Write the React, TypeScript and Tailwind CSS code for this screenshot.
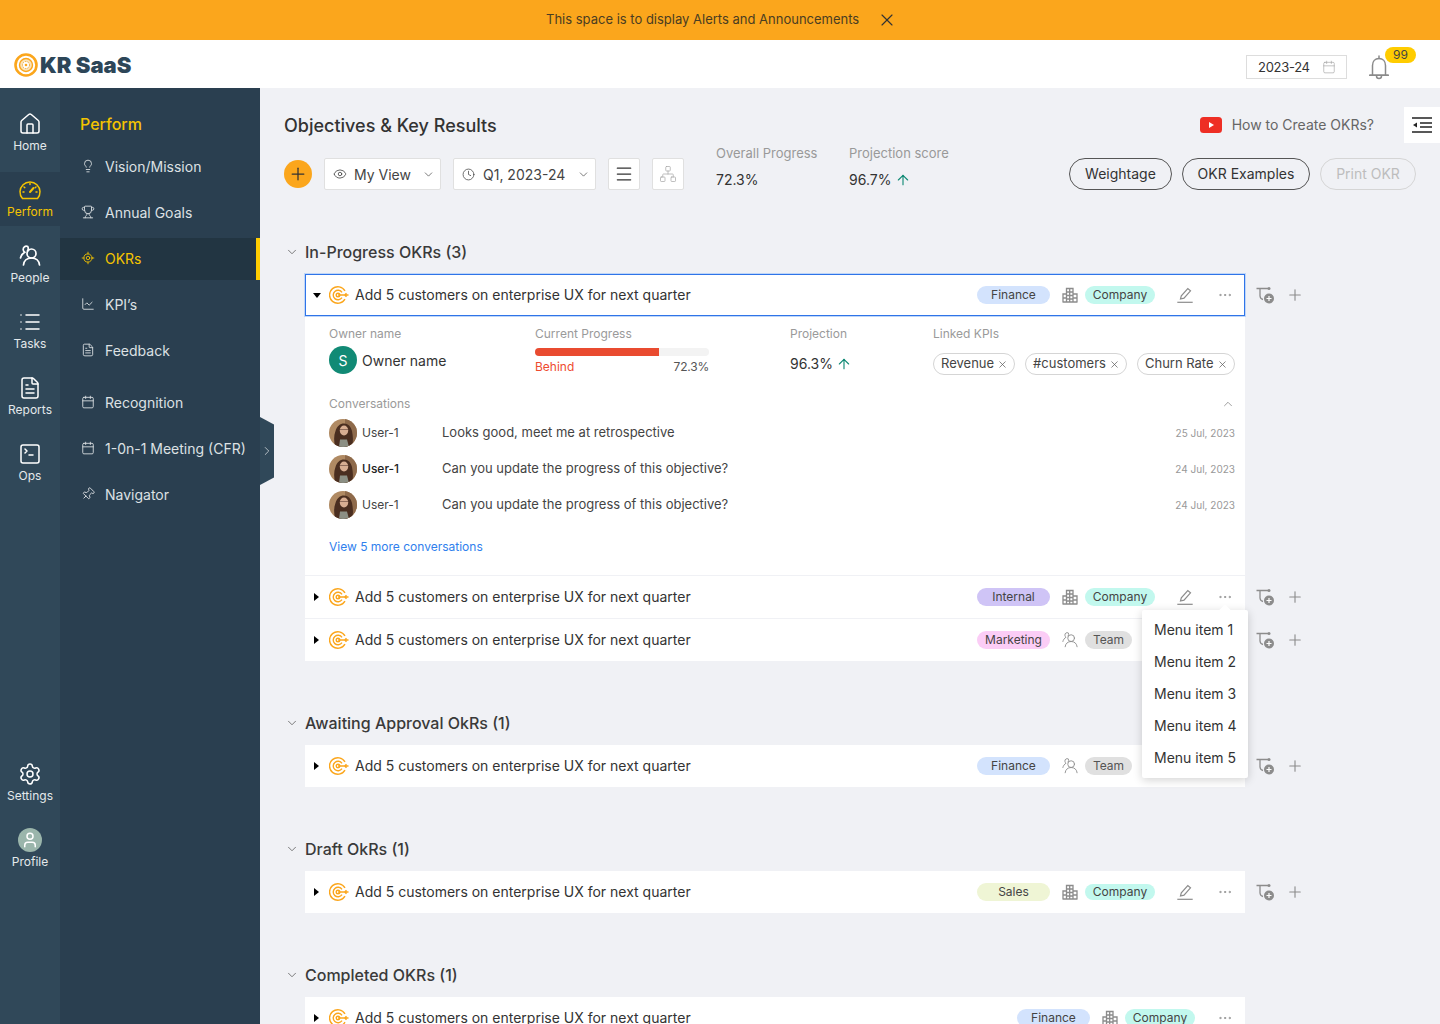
import React from 'react';
import {
  ArrowUp, Calendar, ChartLine, ChevronDown, ChevronRight, ChevronUp, Clock, Ellipsis, Eye, FileText,
  House, Lightbulb, List, LocateFixed, Menu, Network, Pin, Plus, Settings, SquareTerminal, Trophy, User, X,
} from 'lucide-react';

// Hand drawn icons that the icon package has no close match for
const TargetIcon = () => (
  <svg width="20" height="20" viewBox="0 0 20 20" fill="none" stroke="#FBA61C" strokeWidth="1.400" className="shrink-0">
    <path d="M16 5.800A8.300 8.300 0 1 0 16 14.200" />
    <path d="M13 7.300A4.800 4.800 0 1 0 13 12.700" />
    <circle cx="9" cy="10" r="1.800" />
    <path d="M9 10H19.500M17.500 8.200l-1.800 1.800 1.800 1.800" />
  </svg>
);

const LogoIcon = () => (
  <svg width="24" height="24" viewBox="0 0 24 24" fill="none" className="shrink-0">
    <circle cx="12" cy="12" r="10.500" stroke="#FBA61C" strokeWidth="2.600" />
    <circle cx="12" cy="12" r="6.500" fill="#FBE3B8" stroke="#FBA61C" strokeWidth="1.400" />
    <circle cx="12" cy="12" r="3.500" fill="#fff" stroke="#E9A63E" strokeWidth="1" strokeDasharray="1.500 1" />
    <circle cx="12" cy="12" r="1.300" fill="#FBA61C" />
  </svg>
);

const BellIcon = () => (
  <svg width="20" height="25" viewBox="0 0 20 25" fill="none" stroke="#8A8A8A" strokeWidth="1.500" strokeLinecap="round" className="shrink-0">
    <path d="M3.500 20V10.500C3.500 6.500 6 3.500 10 3.500s6.500 3 6.500 7V20" />
    <path d="M.8 20.200h18.400" strokeWidth="1.800" />
    <path d="M10 1v2.500" />
    <path d="M7.500 21a2.500 2.500 0 0 0 5 0" />
  </svg>
);

const PeopleIcon = ({ size = 24, color = 'currentColor', sw = 1.700 }: { size?: number; color?: string; sw?: number }) => (
  <svg width={size} height={size} viewBox="0 0 24 24" fill="none" stroke={color} strokeWidth={sw} strokeLinecap="round" className="shrink-0">
    <circle cx="13.500" cy="9.500" r="4.500" />
    <path d="M5.500 21c.5-4.400 3.600-7 8-7s7.500 2.600 8 7" />
    <path d="M9.500 6.700A4 4 0 0 0 9.800 2.600C7.500 1.400 5 3 5.200 5.600c.1 1.200.7 2.100 1.500 2.700C4.500 9.700 3 11.600 2.500 14" />
  </svg>
);

const BuildingIcon = () => (
  <svg width="16" height="16" viewBox="0 0 16 16" fill="none" stroke="#8C8C8C" strokeWidth="1.300" className="shrink-0">
    <path d="M4.500 15V1.500H11V15M1 15V7h3.500M11 7h4v8M.5 15h15" />
    <path d="M4.500 5h6.500M4.500 8.500h6.500M4.500 12h6.500M7.700 1.500V15M1 11h3.500M11 11h4" />
  </svg>
);

const PencilIcon = () => (
  <svg width="16" height="16" viewBox="0 0 16 16" fill="none" stroke="#8C8C8C" strokeWidth="1.200" className="shrink-0">
    <path d="M3.500 12 4.300 8.800 10.800 1.500l2.700 2.400-6.500 7.200L3.500 12Z" />
    <path d="M.3 15.300h15.400" />
  </svg>
);

const LinkAddIcon = () => (
  <svg width="18" height="18" viewBox="0 0 18 18" fill="none" className="shrink-0">
    <path d="M.5 2.500h11.500M4 2.500v7.500a4 4 0 0 0 3 3.500" stroke="#8C8C8C" strokeWidth="1.300" />
    <circle cx="13" cy="2.500" r="1.500" fill="#8C8C8C" />
    <circle cx="13" cy="12.500" r="5" fill="#8C8C8C" />
    <path d="M13 10v5M10.500 12.500h5" stroke="#fff" strokeWidth="1.200" />
  </svg>
);

const Avatar = () => (
  <div className="w-7 h-7 rounded-full overflow-hidden shrink-0">
    <svg width="28" height="28" viewBox="0 0 28 28">
      <rect width="28" height="28" fill="#B08A63" />
      <rect x="16" width="12" height="28" fill="#8E6A4B" />
      <path d="M6 28c-1-6-1.500-11 .5-16C8 7 11 4.500 15 4.500s7 3 8 7.500c1 5 1.500 11 0 16H6Z" fill="#4A2E20" />
      <ellipse cx="15" cy="11.500" rx="4.200" ry="5" fill="#D8AE92" />
      <path d="M11 10.500h8" stroke="#7C5A4C" strokeWidth=".8" />
      <path d="M11 20.500h7l2 7.500H10l1-7.500Z" fill="#8C8F84" />
    </svg>
  </div>
);

const railTop = [
  { label: 'Home', Icon: House },
  { label: 'Perform', active: true },
  { label: 'People', people: true },
  { label: 'Tasks', Icon: List },
  { label: 'Reports', Icon: FileText },
  { label: 'Ops', Icon: SquareTerminal },
];

const navGroupOne = [
  { label: 'Vision/Mission', Icon: Lightbulb },
  { label: 'Annual Goals', Icon: Trophy },
  { label: 'OKRs', Icon: LocateFixed, active: true },
  { label: 'KPI’s', Icon: ChartLine },
  { label: 'Feedback', Icon: FileText },
];

const navGroupTwo = [
  { label: 'Recognition', Icon: Calendar },
  { label: '1-0n-1 Meeting (CFR)', Icon: Calendar },
  { label: 'Navigator', Icon: Pin, turned: true },
];

const conversations = [
  { text: 'Looks good, meet me at retrospective', date: '25 Jul, 2023' },
  { text: 'Can you update the progress of this objective?', date: '24 Jul, 2023', bold: true },
  { text: 'Can you update the progress of this objective?', date: '24 Jul, 2023' },
];

const kpis = ['Revenue', '#customers', 'Churn Rate'];

const GaugeIcon = () => (
  <svg width="24" height="24" viewBox="0 0 24 24" fill="none" stroke="#F5C400" strokeWidth="1.500" strokeLinecap="round">
    <path d="M4.500 20.500A10 10 0 1 1 19.500 20.500Z" />
    <path d="M12 14l3.500-4" strokeWidth="2" />
    <path d="M12 5.500v1M6 9l.8.6M18 9l-.8.6M5 14h1M18 14h1" />
  </svg>
);

const tagStyles: Record<string, string> = {
  Finance: 'bg-[#D3E3FD]',
  Internal: 'bg-[#CFC4F6]',
  Marketing: 'bg-[#FBCDF6]',
  Sales: 'bg-[#EFF5D5]',
};

const OkrRow = ({ tag, scope, open, noEdit, children }: { tag: string; scope: string; open?: boolean; noEdit?: boolean; children?: React.ReactNode }) => (
  <div className="flex items-center w-[1000px]">
    <div className={`relative w-[940px] h-[42px] shrink-0 flex items-center bg-white pl-[8px] ${open ? 'pr-[11px] border border-[#2F74E8] ring-1 ring-[#BFD6F8]' : 'pr-[12px]'}`}>
      {open
        ? <span className="w-0 h-0 -ml-px mr-[8px] shrink-0 border-l-[4px] border-r-[4px] border-t-[5px] border-l-transparent border-r-transparent border-t-black" />
        : <span className="w-0 h-0 ml-px mr-[10px] shrink-0 border-t-[4px] border-b-[4px] border-l-[5px] border-t-transparent border-b-transparent border-l-black" />}
      <TargetIcon />
      <span className="ml-[6px] -mt-[2px] text-[14px] text-[#333]">Add 5 customers on enterprise UX for next quarter</span>
      <div className="ml-auto flex items-center">
        <span className={`w-[73px] h-[18px] rounded-full text-center text-[12px] leading-[18px] text-[#444] ${tagStyles[tag]}`}>{tag}</span>
        <span className={`${scope === 'Company' ? 'ml-[12px]' : 'ml-[11px]'} flex`}>{scope === 'Company' ? <BuildingIcon /> : <PeopleIcon size={18} color="#8C8C8C" sw={1.200} />}</span>
        <div className={`${scope === 'Company' ? 'ml-[7px]' : 'ml-[6px]'} w-[70px] flex items-center`}>
          {scope === 'Company'
            ? <span className={`w-[70px] rounded-full bg-[#C2F8EE] text-center text-[12px] text-[#444] ${tag === 'Sales' ? 'h-4 leading-4' : 'h-[18px] leading-[18px]'}`}>Company</span>
            : <span className="w-[47px] h-[18px] rounded-full bg-[#E0E0E0] text-center text-[12px] leading-[18px] text-[#555]">Team</span>}
        </div>
        {!noEdit && <span className="ml-[22px]"><PencilIcon /></span>}
        <Ellipsis size={16} strokeWidth={1.300} className={`${noEdit ? 'ml-[22px]' : 'ml-[24px]'} text-[#8C8C8C]`} />
      </div>
      {children}
    </div>
    {!noEdit && (
      <div className="flex items-center ml-[11px]">
        <LinkAddIcon />
        <Plus size={18} strokeWidth={1.500} className="ml-[12px] text-[#8C8C8C]" />
      </div>
    )}
  </div>
);

const SectionHead = ({ title }: { title: string }) => (
  <div className="flex items-center h-6 mt-[50px] mb-[10px]">
    <ChevronDown size={14} strokeWidth={1.300} className="ml-px text-[#555]" />
    <span className="ml-[6px] text-[16px] font-medium text-[#3A3A3A]">{title}</span>
  </div>
);

const Detail = () => (
  <div className="w-[940px] h-[260px] bg-white border-b border-[#F0F1F5] pl-[24px] pr-[10px] pt-[10px]">
    <div className="flex">
      <div className="w-[206px]">
        <div className="text-[12px] leading-4 text-[#9A9A9A]">Owner name</div>
        <div className="flex items-center mt-[4px]">
          <span className="w-7 h-7 rounded-full bg-[#118A75] text-white text-[14px] flex items-center justify-center">S</span>
          <span className="ml-[5px] text-[14px] text-[#333]">Owner name</span>
        </div>
      </div>
      <div className="w-[255px]">
        <div className="text-[12px] leading-4 text-[#9A9A9A]">Current Progress</div>
        <div className="w-[174px] h-2 mt-[6px] rounded-full bg-[#F3F3F3]">
          <div className="h-2 w-[124px] rounded-l-full bg-[#E94B30]" />
        </div>
        <div className="w-[174px] flex justify-between mt-[3px] text-[12px] leading-4">
          <span className="text-[#EE4B2F]">Behind</span>
          <span className="text-[#555] tracking-[-0.2px]">72.3%</span>
        </div>
      </div>
      <div className="w-[143px]">
        <div className="text-[12px] leading-4 text-[#9A9A9A]">Projection</div>
        <div className="flex items-center mt-[11px] text-[14px] text-[#333]">
          96.3%
          <ArrowUp size={16} strokeWidth={1.700} className="ml-[3px] text-[#118A75]" />
        </div>
      </div>
      <div className="flex-1">
        <div className="text-[12px] leading-4 text-[#9A9A9A]">Linked KPIs</div>
        <div className="flex gap-[10px] mt-[11px]">
          {kpis.map((kpi) => (
            <span key={kpi} className="h-[22px] pl-[7px] pr-[6px] flex items-center rounded-full border border-[#D5D5D5] text-[13px] text-[#444]">
              {kpi}
              <X size={11} strokeWidth={1.500} className="ml-[3px] text-[#555]" />
            </span>
          ))}
        </div>
      </div>
    </div>
    <div className="flex items-center justify-between mt-[21px]">
      <span className="text-[12px] leading-4 text-[#9A9A9A]">Conversations</span>
      <ChevronUp size={14} strokeWidth={1.200} className="text-[#777]" />
    </div>
    <div className="mt-[7px] flex flex-col gap-2">
      {conversations.map((c, i) => (
        <div key={i} className="flex items-center h-7">
          <Avatar />
          <span className={`ml-[5px] w-[80px] text-[12px] ${c.bold ? 'font-medium text-[#222]' : 'text-[#444]'}`}>User-1</span>
          <span className="text-[13px] text-[#444]">{c.text}</span>
          <span className="ml-auto text-[10px] text-[#999]">{c.date}</span>
        </div>
      ))}
    </div>
    <div className="mt-[20px] text-[12px] leading-4 text-[#2F80ED]">View 5 more conversations</div>
  </div>
);

const RowMenu = () => (
  <div className="absolute left-[837px] top-[34px] z-10 w-[106px] h-[168px] bg-white rounded-[2px] shadow-[0_2px_10px_rgba(0,0,0,0.18)] py-[3px]">
    <div className="absolute right-[19px] -top-[4px] w-2 h-2 rotate-45 bg-white" />
    {[1, 2, 3, 4, 5].map((n) => (
      <div key={n} className="h-8 pl-[12px] flex items-center text-[14px] text-[#333]">Menu item {n}</div>
    ))}
  </div>
);

export default function App() {
  return (
    <div className="relative w-[1440px] h-[1024px] overflow-hidden flex flex-col font-['Inter',sans-serif] bg-[#F0F1F5]">
      {/* Announcement bar */}
      <div className="h-10 shrink-0 bg-[#FBA61C] flex items-center pl-[546px]">
        <span className="text-[13px] text-[#4A3D22]">This space is to display Alerts and Announcements</span>
        <X size={20} strokeWidth={1.400} className="ml-[18px] text-[#333]" />
      </div>

      {/* Top header */}
      <div className="h-12 shrink-0 bg-white flex items-center pl-[14px] pr-[24px]">
        <span className="mt-[2px] flex"><LogoIcon /></span>
        <span className="ml-[2px] mt-[2px] text-[22px] font-black text-[#2D4658]">KR SaaS</span>
        <div className="ml-auto mt-[6px] w-[101px] h-6 border border-[#DDDDDD] flex items-center justify-between pl-[11px] pr-[10px]">
          <span className="mt-[1px] text-[13px] tracking-[-0.3px] text-[#333]">2023-24</span>
          <Calendar size={14} strokeWidth={1} className="text-[#999]" />
        </div>
        <div className="relative mt-[6px] ml-[22px] mr-[27px]">
          <BellIcon />
          <span className="absolute -top-[8px] left-[16px] w-[31px] h-4 rounded-full bg-[#FFCC00] text-center text-[12px] leading-4 text-[#444]">99</span>
        </div>
      </div>

      <div className="flex-1 flex min-h-0">
        {/* Icon rail */}
        <div className="w-[60px] shrink-0 bg-[#304859] flex flex-col pt-[18px] pb-[148px]">
          <div className="flex flex-col gap-3">
            {railTop.map((item) => (
              <div key={item.label} className={`h-[54px] pt-[6px] flex flex-col items-center ${item.active ? 'bg-[#2A3F50] text-[#F5C400]' : 'text-white'}`}>
                {item.active ? <GaugeIcon /> : item.people ? <PeopleIcon /> : item.Icon ? <item.Icon size={24} strokeWidth={1.500} /> : null}
                <span className={`text-[12px] leading-4 mt-[2px] ${item.active ? '' : 'text-[#E4E8EB]'}`}>{item.label}</span>
              </div>
            ))}
          </div>
          <div className="mt-auto flex flex-col gap-3">
            <div className="h-[54px] pt-[6px] flex flex-col items-center text-white">
              <Settings size={24} strokeWidth={1.500} />
              <span className="text-[12px] leading-4 mt-[2px] text-[#E4E8EB]">Settings</span>
            </div>
            <div className="h-[54px] pt-[6px] flex flex-col items-center text-white">
              <span className="w-6 h-6 rounded-full bg-[#9AB5AB] flex items-center justify-center">
                <User size={18} strokeWidth={2} />
              </span>
              <span className="text-[12px] leading-4 mt-[2px] text-[#E4E8EB]">Profile</span>
            </div>
          </div>
        </div>

        {/* Section nav */}
        <div className="relative w-[200px] shrink-0 bg-[#2A3F50]">
          <div className="pl-[20px] pt-[24px] h-[58px] text-[16px] leading-6 font-medium text-[#F5C400]">Perform</div>
          <div className="flex flex-col gap-1">
            {navGroupOne.map((item) => (
              <div key={item.label} className={`h-[42px] pl-[21px] pb-[2px] flex items-center text-[14px] ${item.active ? 'bg-[#223542] text-[#F5C400] border-r-4 border-[#FFCC00]' : 'text-[#DDE1E4]'}`}>
                <item.Icon size={14} strokeWidth={1.500} className="shrink-0" />
                <span className="ml-[10px]">{item.label}</span>
              </div>
            ))}
          </div>
          <div className="flex flex-col gap-1 mt-[10px]">
            {navGroupTwo.map((item) => (
              <div key={item.label} className="h-[42px] pl-[21px] pb-[2px] flex items-center text-[14px] text-[#DDE1E4]">
                <item.Icon size={14} strokeWidth={1.500} className={`shrink-0 ${item.turned ? 'rotate-45' : ''}`} />
                <span className="ml-[10px]">{item.label}</span>
              </div>
            ))}
          </div>
          {/* Collapse tab */}
          <div className="absolute left-[200px] top-[329px] w-[14px] h-[68px] bg-[#304859] [clip-path:polygon(0_0,100%_11%,100%_89%,0_100%)] flex items-center justify-center text-[#DDE1E4]">
            <ChevronRight size={14} strokeWidth={1.300} />
          </div>
        </div>

        {/* Main content */}
        <div className="relative flex-1 min-w-0 pl-6 pt-[23px]">
          <div className="absolute right-0 top-[19px] w-9 h-9 bg-white flex items-center justify-center">
            <svg width="20" height="18" viewBox="0 0 20 18" fill="none" stroke="#222" strokeWidth="1.400">
              <path d="M0 2h20M8 7h12M8 11h12M0 16h20" />
              <path d="M5 6.500v5L1 9l4-2.500Z" fill="#222" stroke="none" />
            </svg>
          </div>

          <div className="flex items-center h-7 pr-[66px]">
            <span className="text-[18px] font-medium text-[#333]">Objectives &amp; Key Results</span>
            <div className="ml-auto flex items-center">
              <svg width="22" height="16" viewBox="0 0 22 16">
                <rect width="22" height="16" rx="3.500" fill="#EE2E24" />
                <path d="M9 5v6l5-3-5-3Z" fill="#fff" />
              </svg>
              <span className="ml-[10px] -mt-[2px] text-[14px] text-[#666]">How to Create OKRs?</span>
            </div>
          </div>

          <div className="flex items-center h-8 mt-[19px] pr-[24px]">
            <span className="w-7 h-7 rounded-full bg-[#FBA61C] flex items-center justify-center">
              <Plus size={20} strokeWidth={1.500} className="text-[#333]" />
            </span>
            <div className="ml-3 w-[117px] h-8 bg-white border border-[#E0E0E0] rounded-[2px] flex items-center pl-2 pr-[5px] text-[14px] text-[#444]">
              <Eye size={14} strokeWidth={1.400} />
              <span className="ml-[7px]">My View</span>
              <ChevronDown size={13} strokeWidth={1.300} className="ml-auto" />
            </div>
            <div className="ml-3 w-[143px] h-8 bg-white border border-[#E0E0E0] rounded-[2px] flex items-center pl-2 pr-[5px] text-[14px] text-[#444]">
              <Clock size={13} strokeWidth={1.400} />
              <span className="ml-[8px]">Q1, 2023-24</span>
              <ChevronDown size={13} strokeWidth={1.300} className="ml-auto" />
            </div>
            <span className="ml-3 w-8 h-8 bg-white border border-[#E0E0E0] rounded-[2px] flex items-center justify-center">
              <Menu size={20} strokeWidth={1.500} className="text-[#333]" />
            </span>
            <span className="ml-3 w-8 h-8 bg-white border border-[#E0E0E0] rounded-[2px] flex items-center justify-center">
              <Network size={18} strokeWidth={1} className="text-[#AAAAAA]" />
            </span>
            <div className="ml-8 w-[133px] self-start -mt-[13px]">
              <div className="text-[13px] leading-4 text-[#999]">Overall Progress</div>
              <div className="mt-[11px] text-[14px] leading-4 text-[#333]">72.3%</div>
            </div>
            <div className="self-start -mt-[13px]">
              <div className="text-[13px] leading-4 text-[#999]">Projection score</div>
              <div className="mt-[11px] text-[14px] leading-4 text-[#333] flex items-center">
                96.7%
                <ArrowUp size={16} strokeWidth={1.700} className="ml-[4px] text-[#118A75]" />
              </div>
            </div>
            <div className="ml-auto flex items-center gap-[10px]">
              <span className="w-[103px] h-8 rounded-full border border-[#555] text-center text-[14px] leading-[30px] text-[#333]">Weightage</span>
              <span className="w-[128px] h-8 rounded-full border border-[#555] text-center text-[14px] leading-[30px] text-[#333]">OKR Examples</span>
              <span className="w-[96px] h-8 rounded-full border border-[#D5D5D5] text-center text-[14px] leading-[30px] text-[#BDBDBD]">Print OKR</span>
            </div>
          </div>

          {/* OKR sections */}
          <SectionHead title="In-Progress OKRs (3)" />
          <div className="ml-[21px]">
            <OkrRow tag="Finance" scope="Company" open />
            <Detail />
            <div className="border-b border-[#F0F1F5] w-[940px]">
              <OkrRow tag="Internal" scope="Company">
                <RowMenu />
              </OkrRow>
            </div>
            <OkrRow tag="Marketing" scope="Team" />
          </div>

          <SectionHead title="Awaiting Approval OkRs (1)" />
          <div className="ml-[21px]"><OkrRow tag="Finance" scope="Team" /></div>

          <SectionHead title="Draft OkRs (1)" />
          <div className="ml-[21px]"><OkrRow tag="Sales" scope="Company" /></div>

          <SectionHead title="Completed OKRs (1)" />
          <div className="ml-[21px]"><OkrRow tag="Finance" scope="Company" noEdit /></div>
        </div>
      </div>
    </div>
  );
}
